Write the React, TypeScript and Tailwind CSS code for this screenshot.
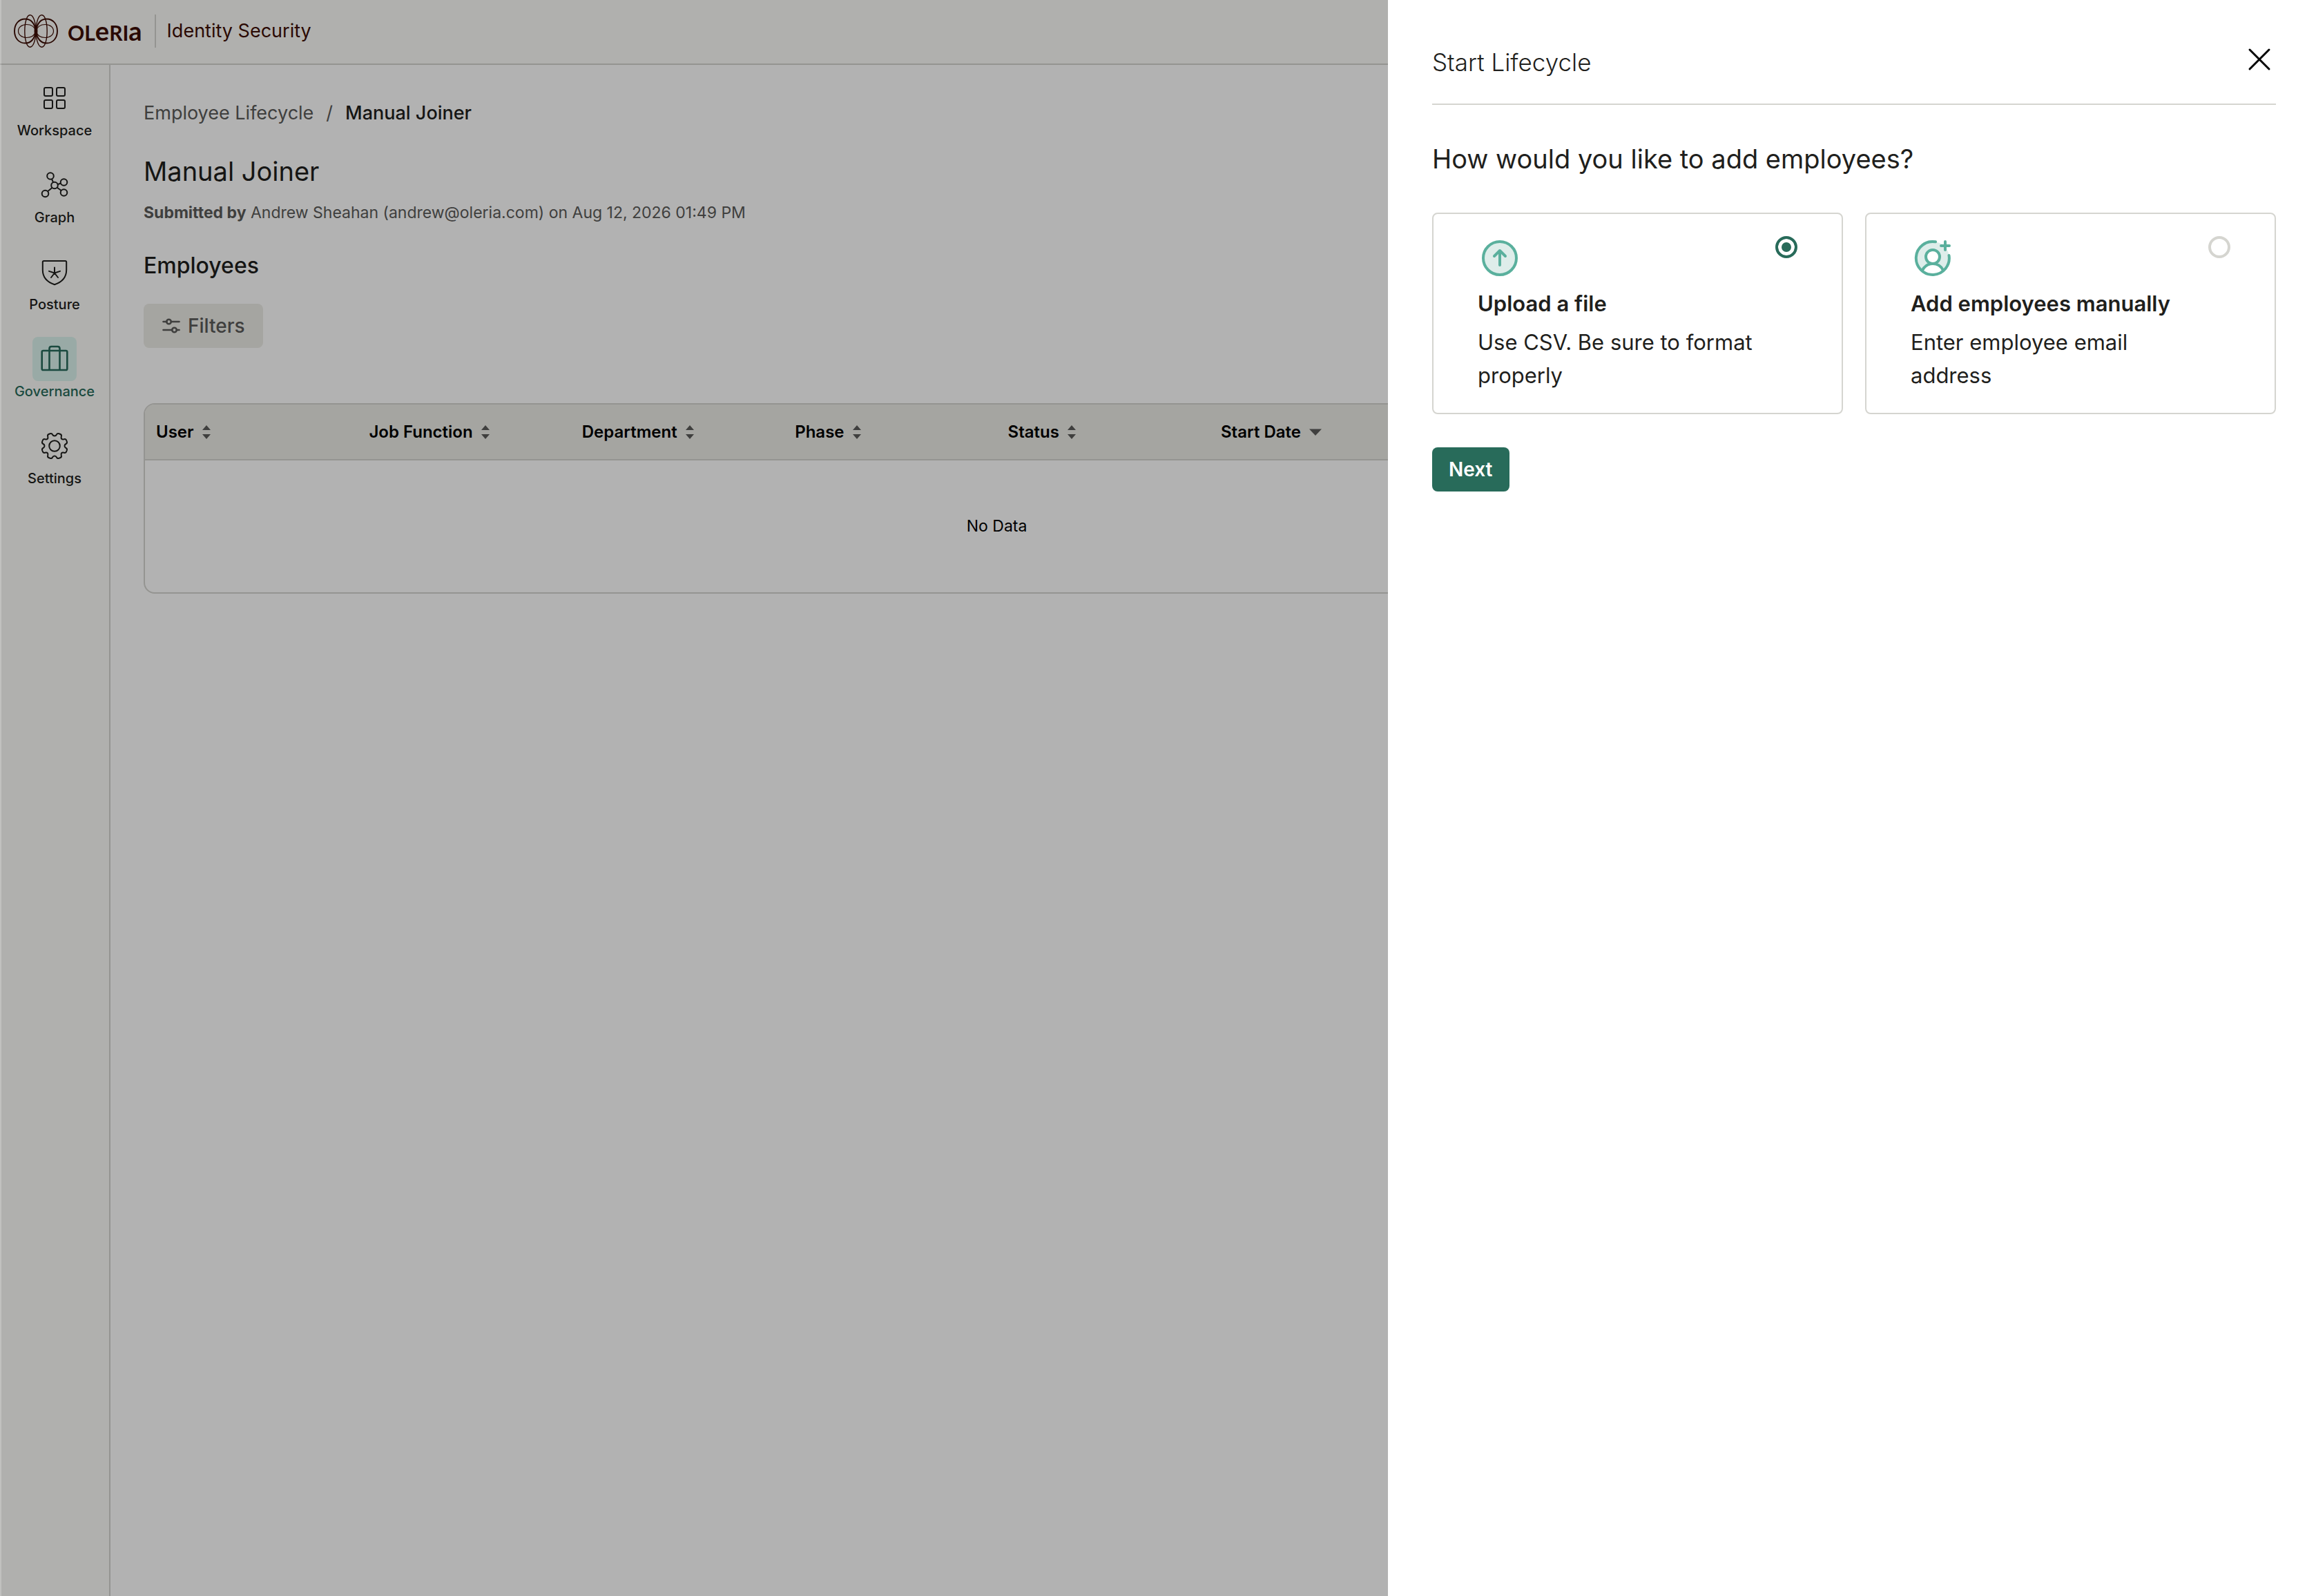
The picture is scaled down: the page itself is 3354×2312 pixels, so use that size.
import { useState } from "react";
import type { ReactNode } from "react";

type Method = "upload" | "manual";

const navItems: { label: string; icon: ReactNode; active?: boolean }[] = [
  { label: "Workspace", icon: <WorkspaceIcon /> },
  { label: "Graph", icon: <GraphIcon /> },
  { label: "Posture", icon: <PostureIcon /> },
  { label: "Governance", icon: <GovernanceIcon />, active: true },
  { label: "Settings", icon: <SettingsIcon /> },
];

const columns = ["User", "Job Function", "Department", "Phase", "Status", "Start Date"];

// Icons
function WorkspaceIcon() {
  return (
    <svg className="size-10" viewBox="0 0 40 40" fill="none" stroke="currentColor" strokeWidth="2">
      <rect x="5" y="5" width="12" height="12" rx="2" />
      <rect x="23" y="5" width="12" height="12" rx="2" />
      <rect x="5" y="23" width="12" height="12" rx="2" />
      <rect x="23" y="23" width="12" height="12" rx="2" />
    </svg>
  );
}

function GraphIcon() {
  return (
    <svg className="size-10" viewBox="0 0 40 40" fill="none" stroke="currentColor" strokeWidth="2">
      <circle cx="20" cy="20.5" r="4.8" />
      <circle cx="14" cy="7" r="4.8" />
      <circle cx="33.5" cy="16" r="4.8" />
      <circle cx="33.5" cy="31" r="4.8" />
      <circle cx="6.5" cy="32.5" r="4.8" />
      <path d="M18 16l-2-4.600M25 19l4-1.500M23.700 23.700l6 4.300M16.500 24l-6.500 5.300" />
    </svg>
  );
}

function PostureIcon() {
  return (
    <svg
      className="size-10"
      viewBox="0 0 40 40"
      fill="none"
      stroke="currentColor"
      strokeWidth="2"
      strokeLinecap="round"
      strokeLinejoin="round"
    >
      <path d="M4.500 4h31a1.700 1.700 0 0 1 1.700 1.700V17c0 11-7.500 18-17.200 21.300C10.300 35 2.800 28 2.800 17V5.700A1.700 1.700 0 0 1 4.500 4z" />
      <path d="M20 21.500v-8M20 21.500l8-2.600M20 21.500l5 6.500M20 21.500l-5 6.500M20 21.500l-8-2.600" />
    </svg>
  );
}

function GovernanceIcon() {
  return (
    <svg
      className="size-10"
      viewBox="0 0 40 40"
      fill="none"
      stroke="currentColor"
      strokeWidth="2.600"
      strokeLinejoin="round"
    >
      <rect x="1.700" y="8" width="36.600" height="28" rx="1.800" />
      <path d="M12.500 36V5c0-1.700 1.300-3 3-3h9c1.700 0 3 1.300 3 3v31" />
    </svg>
  );
}

function SettingsIcon() {
  return (
    <svg
      className="size-10"
      viewBox="0 0 40 40"
      fill="none"
      stroke="currentColor"
      strokeWidth="2"
      strokeLinejoin="round"
    >
      <circle cx="20" cy="20" r="7.800" />
      <path d="M13.500 2.200Q16 1.300 17 3.500Q18 5.500 20 5.500Q22 5.500 23 3.500Q24 1.300 26.500 2.200L28.500 3Q30.500 4 29.800 6.300Q29.200 8.800 30.200 9.800Q31.200 10.800 33.700 10.200Q36 9.500 37 11.500L37.800 13.500Q38.700 16 36.500 17Q34.500 18 34.500 20Q34.500 22 36.500 23Q38.700 24 37.800 26.500L37 28.500Q36 30.500 33.700 29.800Q31.200 29.200 30.200 30.200Q29.200 31.200 29.800 33.700Q30.500 36 28.500 37L26.500 37.800Q24 38.700 23 36.500Q22 34.500 20 34.500Q18 34.500 17 36.500Q16 38.700 13.500 37.800L11.500 37Q9.500 36 10.200 33.700Q10.800 31.200 9.800 30.200Q8.800 29.200 6.300 29.800Q4 30.500 3 28.500L2.200 26.500Q1.300 24 3.500 23Q5.500 22 5.500 20Q5.500 18 3.500 17Q1.300 16 2.200 13.500L3 11.500Q4 9.500 6.300 10.200Q8.800 10.800 9.800 9.800Q10.800 8.800 10.200 6.300Q9.500 4 11.500 3Z" />
    </svg>
  );
}

function LogoMark() {
  return (
    <svg className="h-12 w-16" viewBox="0 0 64 48" fill="none" stroke="currentColor">
      <g strokeWidth="1.900">
        <path d="M32 24C30 12 24 6.500 16.500 6.500C7 6.500 1 14 1 24S7 41.500 16.500 41.500C24 41.500 30 36 32 24" />
        <path d="M32 24C34 12 40 6.500 47.500 6.500C57 6.500 63 14 63 24S57 41.500 47.500 41.500C40 41.500 34 36 32 24" />
      </g>
      <g strokeWidth="1.400">
        <path d="M32 24C31.500 8 27.500 .800 23.500 .800C19 .800 15.800 11 15.800 24S19 47.200 23.500 47.200C27.500 47.200 31.500 40 32 24" />
        <path d="M32 24C32.500 8 36.500 .800 40.500 .800C45 .800 48.200 11 48.200 24S45 47.200 40.500 47.200C36.500 47.200 32.500 40 32 24" />
      </g>
      <g strokeWidth="1.200">
        <path d="M32 24C30 17.500 25 14.500 18.500 14.500C11.500 14.500 6.500 18.500 6.500 24S11.500 33.500 18.500 33.500C25 33.500 30 30.500 32 24" />
        <path d="M32 24C34 17.500 39 14.500 45.500 14.500C52.500 14.500 57.500 18.500 57.500 24S52.500 33.500 45.500 33.500C39 33.500 34 30.500 32 24" />
      </g>
      <path d="M30 16L32 19L34 16L34.500 24L34 32L32 29L30 32L29.500 24Z" fill="currentColor" stroke="none" />
    </svg>
  );
}

function SortIcon() {
  return (
    <svg className="h-5 w-3" viewBox="0 0 12 20" fill="#5b5b59">
      <path d="M6 0L12 7H0zM6 20L0 13h12z" />
    </svg>
  );
}

function SortDescIcon() {
  return (
    <svg className="h-5 w-[18px]" viewBox="0 0 18 20" fill="#5b5b59">
      <path d="M0 5.500h18L9 15z" />
    </svg>
  );
}

function UploadIcon() {
  return (
    <svg
      className="size-16"
      viewBox="0 0 64 64"
      fill="none"
      stroke="#5ab09d"
      strokeWidth="4"
      strokeLinecap="round"
      strokeLinejoin="round"
    >
      <circle cx="32" cy="32" r="24" fill="#deedea" />
      <path d="M32 42V22M24 29l8-8 8 8" />
    </svg>
  );
}

function AddUserIcon() {
  return (
    <svg
      className="size-16"
      viewBox="0 0 64 64"
      fill="none"
      stroke="#5ab09d"
      strokeWidth="4"
      strokeLinecap="round"
      strokeLinejoin="round"
    >
      <circle cx="32" cy="32" r="24" fill="#deedea" stroke="none" />
      <path d="M17 50C20 43 26 40 32 40s12 3 15 10C38 58 26 58 17 50z" fill="#ffffff" stroke="none" />
      <circle cx="32" cy="30" r="10" fill="#ffffff" />
      <path d="M17 49.500C20 43.500 25.500 40 32 40s12 3.500 15 9.500" />
      <path d="M36 8.300A24 24 0 1 0 55.500 28" />
      <path d="M50 8v12M44 14h12" />
    </svg>
  );
}

function MethodCard({
  title,
  description,
  icon,
  value,
  checked,
  onSelect,
}: {
  title: string;
  description: string;
  icon: ReactNode;
  value: Method;
  checked: boolean;
  onSelect: (value: Method) => void;
}) {
  return (
    <label className="block cursor-pointer rounded-lg border-2 border-[#d5d5d0] px-16 pt-8 pb-[30px] text-[31px] leading-[48px]">
      <span className="flex items-start justify-between">
        {icon}
        <input
          type="radio"
          name="method"
          value={value}
          checked={checked}
          onChange={() => onSelect(value)}
          className="size-8 appearance-none rounded-full border-4 border-[#d5d5d0] checked:border-[#286b5a] checked:bg-[#286b5a] checked:shadow-[inset_0_0_0_5px_white]"
        />
      </span>
      <span className="mt-2.5 block font-semibold">{title}</span>
      <span className="mt-2 block pr-12">{description}</span>
    </label>
  );
}

export default function App() {
  const [method, setMethod] = useState<Method>("upload");

  return (
    <div className="flex min-h-screen flex-col bg-white font-['Inter','Liberation_Sans',sans-serif] text-[#1f1f1d]">
      {/* Top bar */}
      <header className="flex h-[94px] items-center border-b-2 border-[#d5d5d0] bg-[#fdfdf9] pb-0.5 pl-5 text-[#3d0d05]">
        <LogoMark />
        <div className="ml-3.5 flex items-baseline font-['Lato',sans-serif] text-[30px] leading-[48px] font-bold">
          OL<span className="text-[38px]">e</span>RI<span className="text-[38px]">a</span>
        </div>
        <div className="mr-4 ml-[18px] h-12 w-0.5 bg-[#d5d5d0]" />
        <span className="text-[27px]">Identity Security</span>
      </header>

      <div className="flex grow">
        {/* Sidebar */}
        <nav className="w-40 shrink-0 border-r-2 border-[#d5d5d0] bg-[#fdfdf9] pt-4">
          <ul className="flex flex-col gap-8">
            {navItems.map((item) => (
              <li key={item.label}>
                <a
                  href="#"
                  className={`flex flex-col items-center text-xl leading-[30px] font-medium ${
                    item.active ? "text-[#276b5b]" : ""
                  }`}
                >
                  <span
                    className={`flex size-16 items-center justify-center rounded-lg ${
                      item.active ? "bg-[#dbf4ee]" : ""
                    }`}
                  >
                    {item.icon}
                  </span>
                  {item.label}
                </a>
              </li>
            ))}
          </ul>
        </nav>

        {/* Page content */}
        <main className="min-w-0 grow pt-12 pr-[58px] pl-12">
          <nav className="flex gap-[18px] text-[27px] leading-[44px] text-[#5b5b59]">
            <a href="#">Employee Lifecycle</a>
            <span>/</span>
            <span className="font-medium text-[#1f1f1d]">Manual Joiner</span>
          </nav>

          <h1 className="mt-8 text-[38px] leading-[60px]">Manual Joiner</h1>
          <p className="mt-3 text-[23px] leading-9 text-[#5b5b59]">
            <span className="font-bold">Submitted by</span> Andrew Sheahan (andrew@oleria.com) on Aug 12, 2026 01:49 PM
          </p>

          <h2 className="mt-9 text-[32px] leading-[46px] font-medium">Employees</h2>
          <button
            type="button"
            className="mt-8 flex h-16 items-center gap-2.5 rounded-lg bg-[#edece7] px-[26px] text-[28px] font-medium text-[#5b5b59]"
          >
            <svg className="size-7" viewBox="0 0 28 28" fill="none" stroke="currentColor" strokeWidth="2.600" strokeLinecap="round">
              <path d="M2.500 8h5M14 8h11.500M2.500 20h12.500M22 20h3.500" />
              <circle cx="10.500" cy="8" r="3.300" />
              <circle cx="18.500" cy="20" r="3.300" />
            </svg>
            Filters
          </button>

          <div className="mt-20 overflow-hidden rounded-2xl border-2 border-[#d5d5d0]">
            <table className="w-full table-fixed text-[23px] text-black">
              <thead>
                <tr className="h-20 border-b-2 border-[#d5d5d0] bg-[#edece7]">
                  {columns.map((column) => (
                    <th key={column} className="px-4 text-left text-2xl font-semibold" scope="col">
                      <button type="button" className="flex items-center gap-3">
                        {column}
                        {column === "Start Date" ? <SortDescIcon /> : <SortIcon />}
                      </button>
                    </th>
                  ))}
                  <td colSpan={4} />
                </tr>
              </thead>
              <tbody>
                <tr className="h-48">
                  <td colSpan={8} className="text-center">
                    No Data
                  </td>
                  <td colSpan={2} />
                </tr>
              </tbody>
            </table>
          </div>
        </main>
      </div>

      {/* Backdrop and drawer */}
      <div className="fixed inset-0 border-l-2 border-white/20 bg-black/30" />
      <aside className="fixed inset-y-0 right-0 w-[1344px] bg-white pr-[58px] pl-16">
        <div className="flex h-[152px] items-center justify-between border-b-2 border-[#d5d5d0] pt-[30px]">
          <h2 className="text-[35px] leading-[54px] font-light">Start Lifecycle</h2>
          <button type="button" aria-label="Close" className="mb-2">
            <svg className="size-12" viewBox="0 0 48 48" stroke="#000000" strokeWidth="3" strokeLinecap="round">
              <path d="M10 10l28 28M38 10L10 38" />
            </svg>
          </button>
        </div>

        <h3 className="mt-12 text-[38px] leading-[60px]">How would you like to add employees?</h3>

        <div className="mt-12 grid grid-cols-2 gap-8">
          <MethodCard
            title="Upload a file"
            description="Use CSV. Be sure to format properly"
            icon={<UploadIcon />}
            value="upload"
            checked={method === "upload"}
            onSelect={setMethod}
          />
          <MethodCard
            title="Add employees manually"
            description="Enter employee email address"
            icon={<AddUserIcon />}
            value="manual"
            checked={method === "manual"}
            onSelect={setMethod}
          />
        </div>

        <button
          type="button"
          className="mt-12 h-16 rounded-lg bg-[#286b5a] px-6 text-[28px] font-semibold text-white"
        >
          Next
        </button>
      </aside>
    </div>
  );
}
